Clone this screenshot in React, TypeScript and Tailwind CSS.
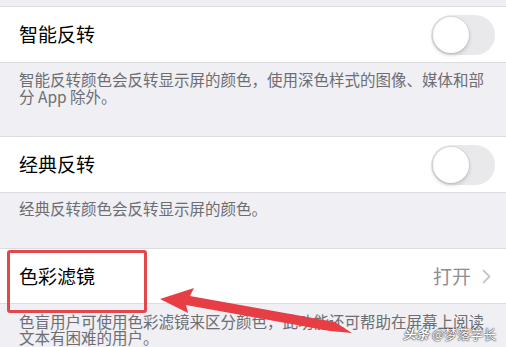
import React from "react";

function Toggle() {
  return (
    <div className="relative w-[64px] h-[40px] rounded-full bg-[#e9e9eb]">
      <div className="absolute left-[2px] top-[2px] w-[36px] h-[36px] rounded-full bg-white shadow-[0_2px_4px_rgba(0,0,0,0.18),0_0_0_1px_rgba(0,0,0,0.05)]" />
    </div>
  );
}

export default function App() {
  const font = { fontFamily: '"Noto Sans CJK SC", "Noto Sans", sans-serif' };

  return (
    <div className="relative w-[506px] h-[347px] overflow-hidden bg-[#efeff4]" style={font}>
      <div className="h-[6px]" />

      <div className="h-[57px] bg-white border-y border-[#dcdce0] flex items-center justify-between pl-[19px] pr-[11px]">
        <span className="text-[19px] text-black">智能反转</span>
        <Toggle />
      </div>
      <p className="pl-[19px] pr-[12px] pt-[8px] pb-[31px] text-[15.5px] leading-[17px] text-[#6d6d72]">
        智能反转颜色会反转显示屏的颜色，使用深色样式的图像、媒体和部分 App 除外。
      </p>

      <div className="h-[57px] bg-white border-y border-[#dcdce0] flex items-center justify-between pl-[19px] pr-[11px]">
        <span className="text-[19px] text-black">经典反转</span>
        <Toggle />
      </div>
      <p className="pl-[19px] pr-[12px] pt-[7px] pb-[31px] text-[15.5px] leading-[17px] text-[#6d6d72]">
        经典反转颜色会反转显示屏的颜色。
      </p>

      <div className="h-[56px] bg-white border-y border-[#dcdce0] flex items-center justify-between pl-[19px] pr-[15px]">
        <span className="text-[19px] text-black">色彩滤镜</span>
        <div className="flex items-center gap-[11px]">
          <span className="text-[19px] text-[#8e8e93]">打开</span>
          <svg width="9" height="15" viewBox="0 0 9 15" fill="none">
            <path d="M1.5 1.5 L7.5 7.5 L1.5 13.5" stroke="#c7c7cc" strokeWidth="1.8" strokeLinecap="round" strokeLinejoin="round" />
          </svg>
        </div>
      </div>
      <p className="pl-[19px] pr-[12px] pt-[9px] text-[15.5px] leading-[16px] text-[#6d6d72]">
        色盲用户可使用色彩滤镜来区分颜色，此功能还可帮助在屏幕上阅读文本有困难的用户。
      </p>

      {/* annotation box */}
      <div className="absolute left-[7px] top-[250px] w-[140px] h-[63px] border-[3px] border-[#e2474c] rounded-[3px]" />

      {/* annotation arrow */}
      <svg className="absolute left-0 top-0" width="506" height="347" viewBox="0 0 506 347">
        <polygon
          points="160,299 194,288 190,296 335,322 352,333 330,331 186,305 188,313"
          fill="#e63e44"
        />
      </svg>

      {/* watermark */}
      <div className="absolute left-[403px] top-[325px] text-[13px] leading-[18px] text-white [text-shadow:0_0_2px_rgba(0,0,0,0.8),0_0_1px_rgba(0,0,0,0.9)]">
        <span className="italic font-bold">头条</span> @梦落学长
      </div>
    </div>
  );
}
